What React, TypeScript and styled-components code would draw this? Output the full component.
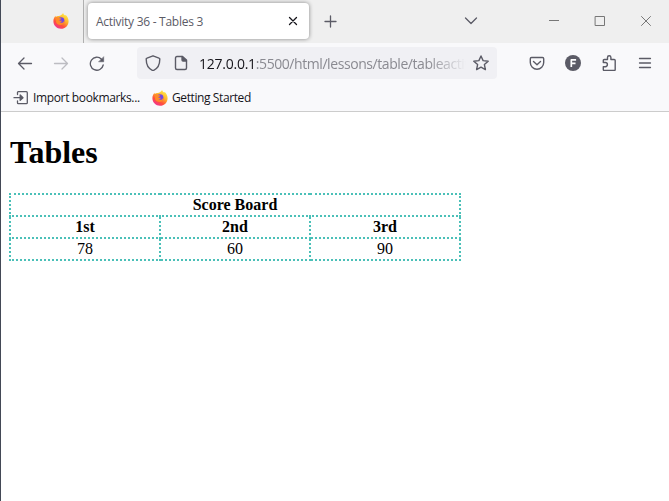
import React from "react";
import styled, { createGlobalStyle } from "styled-components";

const GlobalStyle = createGlobalStyle`
  * { box-sizing: border-box; }
  body { margin: 0; background: #fff; overflow: hidden; }
`;

const Window = styled.div`
  width: 669px;
  height: 501px;
  display: flex;
  flex-direction: column;
  border-left: 1px solid #434956;
  background: #fff;
  font-family: "Open Sans", "Noto Sans", sans-serif;
  overflow: hidden;
`;

const TabBar = styled.div`
  height: 43px;
  flex: none;
  display: flex;
  align-items: flex-start;
  background: #efefef;
`;

const PinnedTab = styled.div`
  width: 83px;
  height: 43px;
  padding: 13px 0 0 52px;
  border-right: 1px solid #b0b0b0;
`;

const ActiveTab = styled.div`
  width: 221px;
  height: 36px;
  margin: 3px 0 0 4px;
  padding: 0 8px;
  display: flex;
  align-items: center;
  justify-content: space-between;
  border-radius: 4px;
  background: #fff;
  box-shadow: 0 0 4px rgba(0, 0, 0, 0.45);
`;

const Label = styled.span<{ $size: number; $spacing: number; $color: string }>`
  font-size: ${(p) => p.$size}px;
  letter-spacing: ${(p) => p.$spacing}px;
  color: ${(p) => p.$color};
  line-height: 18px;
  padding-top: 1px;
  white-space: nowrap;
`;

const Icon = styled.svg<{ $left?: number; $top?: number; $color?: string }>`
  display: block;
  flex: none;
  width: 16px;
  height: 16px;
  margin-left: ${(p) => p.$left ?? 0}px;
  margin-top: ${(p) => p.$top ?? 0}px;
  fill: none;
  stroke: ${(p) => p.$color ?? "#5b5b66"};
  stroke-width: 1.3;
  stroke-linecap: round;
  stroke-linejoin: round;
`;

const Toolbar = styled.div`
  height: 40px;
  flex: none;
  display: flex;
  align-items: center;
  background: #f9f9fb;
`;

const AddressBar = styled.div`
  width: 360px;
  height: 32px;
  margin-left: 32px;
  padding-left: 8px;
  display: flex;
  align-items: center;
  border-radius: 4px;
  background: #f0f0f4;
`;

const Address = styled.div`
  width: 267px;
  height: 24px;
  margin-left: 10px;
  padding-top: 1px;
  overflow: hidden;
  white-space: nowrap;
  font-size: 14px;
  line-height: 23px;
  letter-spacing: -0.43px;
  color: #8a8a91;
  mask-image: linear-gradient(to right, #000 calc(100% - 38px), transparent);
`;

const Host = styled.span`
  letter-spacing: -0.25px;
  color: #15141a;
`;

const Bookmarks = styled.div`
  height: 29px;
  flex: none;
  display: flex;
  align-items: flex-start;
  padding: 5px 0 0 12px;
  background: #f9f9fb;
  border-bottom: 1px solid #ccc;
`;

const Bookmark = styled.div<{ $width: number }>`
  width: ${(p) => p.$width}px;
  display: flex;
  align-items: center;
  gap: 4px;
`;

const Page = styled.main`
  flex: 1;
  padding: 22px 8px 0;
  color: #000;
  font-family: "Liberation Serif", serif;
`;

const Heading = styled.h1`
  margin: 0 0 22px;
  padding-left: 1px;
  font-size: 32px;
  line-height: 37px;
  font-weight: bold;
`;

const ScoreTable = styled.table`
  width: 452px;
  table-layout: fixed;
  border-collapse: collapse;
  font-size: 16px;
  line-height: 18px;
  text-align: center;

  th, td {
    height: 22px;
    padding: 1px;
    border: 2px dotted #4bc0b8;
  }
`;

function Firefox({ id }: { id: string }) {
  return (
    <Icon viewBox="0 0 16 16">
      <defs>
        <linearGradient id={id + "a"} x1="0.85" y1="0.05" x2="0.25" y2="1">
          <stop offset="0" stopColor="#fff04a" />
          <stop offset="0.4" stopColor="#ffb02a" />
          <stop offset="0.7" stopColor="#ff503c" />
          <stop offset="1" stopColor="#f0309a" />
        </linearGradient>
      </defs>
      <g stroke="none">
        <path fill={`url(#${id}a)`} d="M10.1.1c.3 1.1 1 1.8 2 2.5.3-.2.5-.3.7-.6 1.6 1.5 2.8 3.8 2.8 6.2 0 4.4-3.4 7.6-7.6 7.6S.4 12.5.4 8.300c0-2.400 1-4.300 2.300-5.500v1.400c1-1 1.900-1.200 3.200-1.200C6.800 2.900 9 2 10.100.100Z" />
        <circle cx="8" cy="7.700" r="3.400" fill="#7145e6" />
        <path fill="#ff8a27" d="M2.400 4.500c1.600-.700 3.200-.2 3.900.6l2.100.3c-.1.900-1.200 1-1.700 1.400-.4.500-.1 1 .6 1 .8 0 1.300-.3 1.800 0-.5 1.100-1.600 1.500-2.700 1.300 1.600 1.500 4.600.700 4.800-1.800.8 2.800-1.200 4.700-3.800 4.700-3.200 0-4.800-2.400-4.300-4.700Z" />
      </g>
    </Icon>
  );
}

export default function App() {
  return (
    <>
      <GlobalStyle />
      <Window>
        <TabBar>
          <PinnedTab><Firefox id="pin" /></PinnedTab>
          <ActiveTab>
            <Label $size={12} $spacing={-0.27} $color="#5b5b66">Activity 36 - Tables 3</Label>
            <Icon viewBox="0 0 16 16" $color="#15141a"><path d="M4.500 4.500l7 7M11.500 4.500l-7 7" /></Icon>
          </ActiveTab>
          <Icon viewBox="0 0 16 16" $left={13} $top={13}><path d="M8.500 3v11M3 8.500h11" /></Icon>
          <Icon viewBox="0 0 16 16" $left={125} $top={13}><path d="M2.500 5l5.500 5.500L13.500 5" /></Icon>
          <Icon viewBox="0 0 16 16" $left={67} $top={13} $color="#777"><path strokeWidth="1" strokeLinecap="butt" d="M3 7.500h10" /></Icon>
          <Icon viewBox="0 0 16 16" $left={30} $top={13} $color="#777"><path strokeWidth="1" strokeLinejoin="miter" d="M3.500 3.500h9v9h-9Z" /></Icon>
          <Icon viewBox="0 0 16 16" $left={30} $top={13} $color="#777"><path strokeWidth="1" d="M3.500 3.500l9 9M12.500 3.500l-9 9" /></Icon>
        </TabBar>
        <Toolbar>
          <Icon viewBox="0 0 16 16" $left={16}><path d="M14.500 8.500H1.500M7 3L1.500 8.500 7 14" /></Icon>
          <Icon viewBox="0 0 16 16" $left={20} $color="#bdbdc2"><path d="M1.500 8.500h13M9 3l5.500 5.500L9 14" /></Icon>
          <Icon viewBox="0 0 16 16" $left={20}>
            <path d="M14.200 10A6.500 6.500 0 1 1 12.500 4.200" />
            <path d="M14.700 2v4.800H9.900Z" fill="#5b5b66" strokeWidth=".5" />
          </Icon>
          <AddressBar>
            <Icon viewBox="0 0 16 16"><path strokeWidth="1.400" d="M8 .8l6 2.400c.5 0 .8.400.8.900 0 5.500-2 9.500-6.100 11.200q-.7.300-1.400 0C3.200 13.600 1.200 9.600 1.200 4.100c0-.5.3-.9.800-.9Z" /></Icon>
            <Icon viewBox="0 0 16 16" $left={12}>
              <path strokeWidth="1.400" d="M4 1.500h5.500L13.500 5v8q0 1.500-1.500 1.500H4q-1.500 0-1.500-1.500V3q0-1.500 1.500-1.500Z" />
              <path d="M9 1.500V5q0 1 1 1h3.500Z" fill="#5b5b66" />
            </Icon>
            <Address><Host>127.0.0.1</Host>:5500/html/lessons/table/tableactiv</Address>
            <Icon viewBox="0 0 16 16" $left={7}><path strokeWidth="1.400" d="M8 1l2.100 4.600 5.100.6-3.800 3.400 1 5L8 12.200l-4.400 2.400 1-5L.8 6.200l5.100-.6Z" /></Icon>
          </AddressBar>
          <Icon viewBox="0 0 16 16" $left={32}>
            <path strokeWidth="1.400" d="M2.500 2.500h11q1.200 0 1.200 1.200V7.500a6.700 6.700 0 0 1-13.400 0V3.700q0-1.200 1.200-1.200Z" />
            <path strokeWidth="1.400" d="M4.500 6.500L8 9.700l3.500-3.200" />
          </Icon>
          <Icon viewBox="0 0 16 16" $left={20}>
            <circle cx="8" cy="8" r="8" fill="#5b5b66" stroke="none" />
            <path stroke="#fff" strokeLinecap="butt" strokeWidth="1.700" d="M6.300 12V4.900h4.800M6.300 8.400h4.200" />
          </Icon>
          <Icon viewBox="0 0 16 16" $left={20}>
            <path strokeWidth="1.400" d="M2.300 7.500V5.500q0-1 1-1H6.500V2.500a1.700 1.700 0 0 1 3.400 0v2h3.300q1 0 1 1v9q0 1-1 1H3.300q-1 0-1-1v-2.800h2a1.900 1.900 0 0 0 0-4.200Z" />
          </Icon>
          <Icon viewBox="0 0 16 16" $left={20}><path d="M2.500 3.500h11M2.500 8h11M2.500 12.500h11" /></Icon>
        </Toolbar>
        <Bookmarks>
          <Bookmark $width={139}>
            <Icon viewBox="0 0 16 16">
              <path d="M4.500 4.500v-2q0-.8.8-.8h8q1 0 1 1v10q0 1-1 1h-8q-.8 0-.8-.8v-2M1 7.700h8" />
              <path d="M7.200 5L10 7.700 7.200 10.400Z" fill="#5b5b66" />
            </Icon>
            <Label $size={12} $spacing={-0.36} $color="#15141a">Import bookmarks...</Label>
          </Bookmark>
          <Bookmark $width={100}>
            <Firefox id="bm" />
            <Label $size={12} $spacing={-0.4} $color="#15141a">Getting Started</Label>
          </Bookmark>
        </Bookmarks>
        <Page>
          <Heading>Tables</Heading>
          <ScoreTable>
            <tbody>
              <tr><th colSpan={3}>Score Board</th></tr>
              <tr><th>1st</th><th>2nd</th><th>3rd</th></tr>
              <tr><td>78</td><td>60</td><td>90</td></tr>
            </tbody>
          </ScoreTable>
        </Page>
      </Window>
    </>
  );
}
